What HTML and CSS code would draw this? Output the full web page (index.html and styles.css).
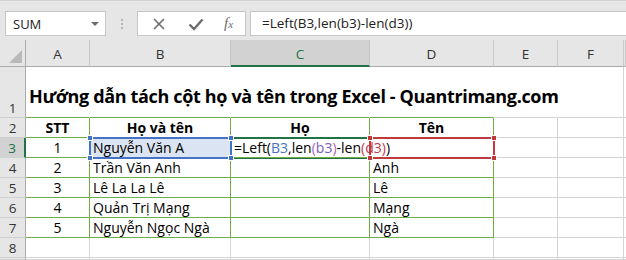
FILE: index.html
```html
<!DOCTYPE html>
<html lang="vi">
<head>
    <meta charset="UTF-8">
    <title>Excel - Left formula</title>
    <link rel="stylesheet" href="styles.css">
</head>
<body>
    <div class="bar">
        <div class="namebox">
            <span>SUM</span>
            <i class="caret"></i>
        </div>
        <div class="grip"><i></i><i></i><i></i></div>
        <div class="btns">
            <svg class="ico" width="14" height="14" viewBox="0 0 14 14"><path d="M2 2 L12 12 M12 2 L2 12" stroke="#6b6b6b" stroke-width="1.6" fill="none"/></svg>
            <svg class="ico" width="16" height="14" viewBox="0 0 16 14"><path d="M1.5 7.5 L6 12 L14.5 2.5" stroke="#6b6b6b" stroke-width="2.4" fill="none"/></svg>
            <span class="fx">f<small>x</small></span>
        </div>
        <div class="input">=Left(B3,len(b3)-len(d3))</div>
    </div>

    <div class="sheet">
        <!-- column headers -->
        <div class="hd corner"><i class="tri"></i></div>
        <div class="hd">A</div>
        <div class="hd">B</div>
        <div class="hd sel-col">C</div>
        <div class="hd">D</div>
        <div class="hd">E</div>
        <div class="hd">F</div>
        <div class="hd"></div>

        <!-- row 1 -->
        <div class="rh">1</div>
        <div class="c nr gb title">Hướng dẫn tách cột họ và tên trong Excel - Quantrimang.com</div>
        <div class="c nr gb"></div>
        <div class="c nr gb"></div>
        <div class="c nr gb"></div>
        <div class="c nr"></div>
        <div class="c"></div>
        <div class="c"></div>

        <!-- row 2 -->
        <div class="rh">2</div>
        <div class="c t th">STT</div>
        <div class="c t th">Họ và tên</div>
        <div class="c t th">Họ</div>
        <div class="c t th">Tên</div>
        <div class="c"></div>
        <div class="c"></div>
        <div class="c"></div>

        <!-- row 3 -->
        <div class="rh sel-row">3</div>
        <div class="c t num">1</div>
        <div class="c t ref-fill">Nguyễn Văn A</div>
        <div class="c t edit">=Left(<b class="r1">B3</b>,len<b class="p2">(</b><b class="r2">b3</b><b class="p2">)</b>-len<b class="p3">(</b><b class="r3">d3</b><b class="p3">)</b>)<i class="cursor"></i></div>
        <div class="c t"></div>
        <div class="c"></div>
        <div class="c"></div>
        <div class="c"></div>

        <!-- row 4 -->
        <div class="rh">4</div>
        <div class="c t num">2</div>
        <div class="c t">Trần Văn Anh</div>
        <div class="c t"></div>
        <div class="c t">Anh</div>
        <div class="c"></div>
        <div class="c"></div>
        <div class="c"></div>

        <!-- row 5 -->
        <div class="rh">5</div>
        <div class="c t num">3</div>
        <div class="c t">Lê La La Lê</div>
        <div class="c t"></div>
        <div class="c t">Lê</div>
        <div class="c"></div>
        <div class="c"></div>
        <div class="c"></div>

        <!-- row 6 -->
        <div class="rh">6</div>
        <div class="c t num">4</div>
        <div class="c t">Quản Trị Mạng</div>
        <div class="c t"></div>
        <div class="c t">Mạng</div>
        <div class="c"></div>
        <div class="c"></div>
        <div class="c"></div>

        <!-- row 7 -->
        <div class="rh">7</div>
        <div class="c t num">5</div>
        <div class="c t">Nguyễn Ngọc Ngà</div>
        <div class="c t"></div>
        <div class="c t">Ngà</div>
        <div class="c"></div>
        <div class="c"></div>
        <div class="c"></div>

        <!-- row 8 -->
        <div class="rh">8</div>
        <div class="c"></div>
        <div class="c"></div>
        <div class="c"></div>
        <div class="c"></div>
        <div class="c"></div>
        <div class="c"></div>
        <div class="c"></div>

        <!-- row 9, only its top edge shows -->
        <div class="rh"></div>
        <div class="c"></div>
        <div class="c"></div>
        <div class="c"></div>
        <div class="c"></div>
        <div class="c"></div>
        <div class="c"></div>
        <div class="c"></div>

        <!-- selection outlines -->
        <div class="box active"></div>
        <div class="box blue"><i class="h tl"></i><i class="h tr"></i><i class="h bl"></i><i class="h br"></i></div>
        <div class="box red"><i class="h tl"></i><i class="h tr"></i><i class="h bl"></i><i class="h br"></i></div>
    </div>
</body>
</html>
```

FILE: styles.css
```css
* {
    box-sizing: border-box;
}
body {
    margin: 0;
    width: 626px;
    height: 260px;
    overflow: hidden;
    background: #e6e6e6;
    font-family: "Open Sans", "Noto Sans", sans-serif;
    color: #000;
}

/* formula bar */
.bar {
    display: flex;
    align-items: flex-start;
    width: 626px;
    height: 40px;
    padding: 10px 0 0 5px;
    border-top: 1px solid #d2d2d2;
    background: #e6e6e6;
}
.namebox {
    display: flex;
    align-items: center;
    justify-content: space-between;
    width: 101px;
    height: 25px;
    padding: 0 6px 0 7px;
    background: #fff;
    border: 1px solid #c6c6c6;
    font-size: 13px;
    color: #222;
}
.caret {
    width: 0;
    height: 0;
    border-left: 4px solid transparent;
    border-right: 4px solid transparent;
    border-top: 4px solid #6d6d6d;
}
.grip {
    width: 31px;
    height: 25px;
    display: flex;
    flex-direction: column;
    align-items: center;
    justify-content: center;
    gap: 2px;
}
.grip i {
    width: 2px;
    height: 2px;
    background: #b4b4b4;
}
.btns {
    display: flex;
    align-items: center;
    width: 109px;
    height: 25px;
    padding-left: 14px;
    gap: 22px;
    background: #fff;
    border: 1px solid #c6c6c6;
}
.fx {
    font-family: "Liberation Serif", serif;
    font-style: italic;
    font-size: 15px;
    color: #6b6b6b;
    margin-left: -2px;
}
.fx small {
    font-size: 11px;
}
.input {
    flex: 1;
    height: 25px;
    margin-left: 4px;
    padding-left: 11px;
    line-height: 23px;
    background: #fff;
    border: 1px solid #c6c6c6;
    border-right: none;
    font-size: 13.5px;
    color: #222;
}

/* sheet grid */
.sheet {
    position: relative;
    display: grid;
    grid-template-columns: 26px 64px 141px 139px 124px 64px 66px 2px;
    grid-template-rows: 27px 51px repeat(7, 20px) 2px;
    background: #fff;
}
.hd {
    display: flex;
    align-items: center;
    justify-content: center;
    background: #e6e6e6;
    border-right: 1px solid #c8c8c8;
    border-bottom: 1px solid #ababab;
    font-size: 13.5px;
    color: #333;
    padding-top: 2px;
}
.corner {
    position: relative;
    border-right-color: #ababab;
}
.tri {
    position: absolute;
    right: 3px;
    bottom: 3px;
    width: 0;
    height: 0;
    border-left: 13px solid transparent;
    border-bottom: 13px solid #b9b9b9;
}
.sel-col {
    background: #d2d2d2;
    border-bottom: 2px solid #217346;
    color: #217346;
}
.rh {
    display: flex;
    align-items: flex-end;
    justify-content: center;
    background: #e6e6e6;
    border-right: 1px solid #ababab;
    border-bottom: 1px solid #d0d0d0;
    font-size: 13.5px;
    color: #333;
}
.sel-row {
    background: #d2d2d2;
    border-right: 2px solid #217346;
    color: #217346;
}
.c {
    display: flex;
    align-items: flex-end;
    padding: 0 0 0 3px;
    white-space: nowrap;
    border-right: 1px solid #d4d4d4;
    border-bottom: 1px solid #d4d4d4;
    font-size: 14px;
    line-height: 19px;
}
.c.nr {
    border-right-color: transparent;
}
.c.gb {
    border-bottom-color: #70ad47;
}
.c.t {
    border-right-color: #70ad47;
    border-bottom-color: #70ad47;
}
.title {
    font-size: 18px;
    font-weight: 700;
    line-height: 26px;
    padding-left: 3px;
    padding-bottom: 8px;
    letter-spacing: -0.35px;
}
.th {
    justify-content: center;
    font-weight: 700;
    padding-left: 0;
}
.num {
    justify-content: center;
    padding-left: 0;
}
.ref-fill {
    background: #dbe4f3;
}
.edit {
    overflow: visible;
    position: relative;
    z-index: 2;
}
.edit b {
    font-weight: 400;
}
.r1 { color: #4a72c4; }
.r2 { color: #7c5cc0; }
.p2 { color: #b05fb0; }
.r3, .p3 { color: #c23a4c; }
.cursor {
    display: inline-block;
    width: 1px;
    height: 16px;
    margin: 0 0 2px 2px;
    background: #000;
}

/* range outlines */
.box {
    position: absolute;
    top: 97px;
    height: 22px;
    border: 2px solid;
    z-index: 3;
}
.active {
    left: 229px;
    width: 142px;
    border-color: #217346;
    border-left: none;
    border-right: none;
    z-index: 1;
}
.blue {
    left: 89px;
    width: 143px;
    border-color: #4472c4;
}
.red {
    left: 369px;
    width: 126px;
    border-color: #c0393f;
}
.h {
    position: absolute;
    width: 6px;
    height: 6px;
    background: currentColor;
    border: 1px solid #fff;
}
.blue .h { color: #4472c4; }
.red .h { color: #c0393f; }
.tl { left: -4px; top: -4px; }
.tr { right: -4px; top: -4px; }
.bl { left: -4px; bottom: -4px; }
.br { right: -4px; bottom: -4px; }
```
